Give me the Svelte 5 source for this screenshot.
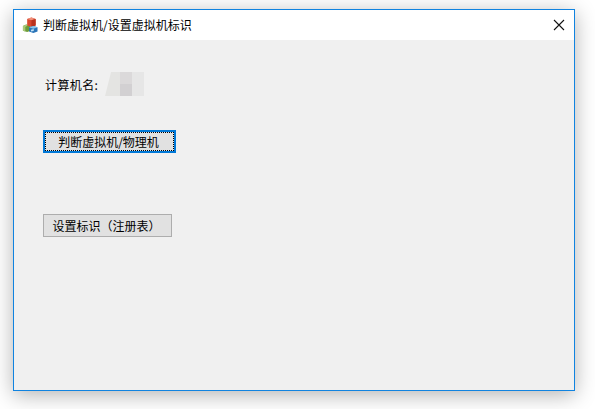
<script>
	const title = '判断虚拟机/设置虚拟机标识';
</script>

<div class="page">
	<div class="window">
		<header class="titlebar">
			<svg class="app-icon" width="16" height="16" viewBox="0 0 16 17">
				<path d="M0.5 9.5 4 8 8.5 9.5 8.5 14.5 5 16 0.5 14.5z" fill="#6d9c3a" />
				<path d="M0.5 9.5 4 8 6 8.7 3 10.5 3 15.3 0.5 14.5z" fill="#a8c878" />
				<path d="M5 2 9.5 0.5 14 2 14 9 9.5 10.5 5 9z" fill="#d9482f" />
				<path d="M5 2 9.5 0.5 14 2 9.5 3.5z" fill="#f0907a" />
				<path d="M9.5 3.5 14 2 14 9 9.5 10.5z" fill="#b8321f" />
				<path d="M7 11 11.5 9.5 16 11 16 15.5 11.5 17 7 15.5z" fill="#2a74b8" />
				<path d="M7 11 11.5 9.5 16 11 11.5 12.5z" fill="#8cc4ea" />
				<path d="M9 13.5 12 12.8 12 15 9 15.3z" fill="#bfe0f5" />
			</svg>
			<span class="title">{title}</span>
			<svg class="close" width="12" height="12" viewBox="0 0 12 12">
				<path d="M1 1 11 11M11 1 1 11" stroke="#111" stroke-width="1.1" fill="none" />
			</svg>
		</header>

		<main class="content">
			<div class="name-row">
				<span>计算机名:</span>
				<div class="blur">
					<i class="a"></i>
					<i class="b"></i>
					<i class="c"></i>
				</div>
			</div>
			<button class="focused">判断虚拟机/物理机</button>
			<button class="second">设置标识（注册表）</button>
		</main>
	</div>
</div>

<style>
	:global(body) {
		background: #fff;
		font-family: "Noto Sans CJK SC", "Liberation Sans", sans-serif;
		font-size: 12px;
		color: #000;
	}

	.page {
		box-sizing: border-box;
		width: 595px;
		height: 409px;
		padding: 9px 0 0 13px;
		overflow: hidden;
	}

	.window {
		box-sizing: border-box;
		width: 562px;
		height: 382px;
		border: 1px solid #1083e0;
		background: #f0f0f0;
		box-shadow: 0 4px 20px rgba(0, 0, 0, 0.3);
	}

	.titlebar {
		display: flex;
		align-items: center;
		height: 30px;
		padding: 0 9px 0 8px;
		background: #fff;
	}

	.app-icon {
		margin: -1px 5px 0 0;
	}

	.title {
		flex: 1;
		line-height: 30px;
	}

	.content {
		display: flex;
		flex-direction: column;
		align-items: flex-start;
		padding: 32px 0 0 29px;
	}

	.name-row {
		display: flex;
		align-items: center;
		height: 24px;
		padding-left: 2px;
		gap: 5px;
	}

	.name-row span {
		width: 55px;
		letter-spacing: 0.4px;
	}

	.blur {
		display: flex;
		height: 24px;
	}

	.blur i {
		display: block;
		height: 100%;
	}

	.a {
		width: 15px;
		background: #e4e4e2;
		clip-path: polygon(6px 0, 100% 0, 100% 100%, 0 100%);
	}

	.b {
		width: 12px;
		background: linear-gradient(#dbd9da 50%, #d2d0d2 50%);
	}

	.c {
		width: 12px;
		background: #e6e6e6;
	}

	button {
		box-sizing: border-box;
		height: 23px;
		padding: 0 2px 0 0;
		border: 1px solid #adadad;
		border-radius: 0;
		background: #e1e1e1;
		font: inherit;
		color: #000;
	}

	.focused {
		width: 133px;
		margin-top: 34px;
		border: 2px solid #0078d7;
		outline: 1px dotted #000;
		outline-offset: -3px;
	}

	.second {
		width: 129px;
		margin-top: 61px;
	}
</style>
